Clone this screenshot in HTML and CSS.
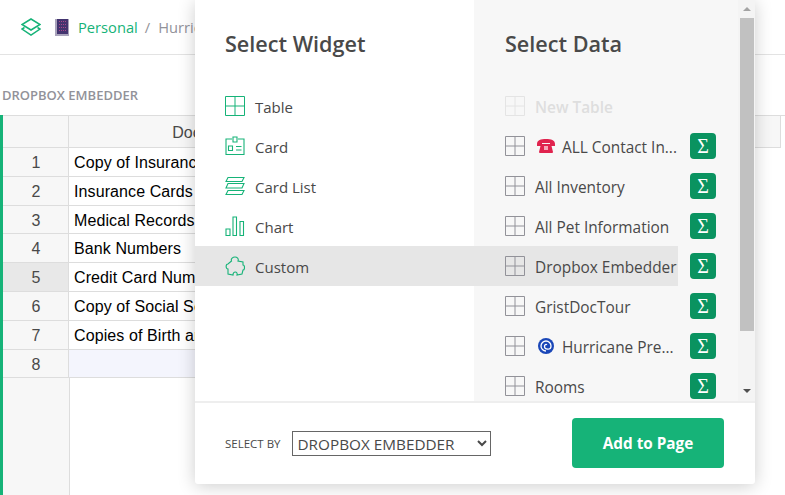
FILE: index.html
```html
<!DOCTYPE html>
<html lang="en">
<head>
  <meta charset="UTF-8">
  <title>Select Widget</title>
  <link rel="stylesheet" href="styles.css">
</head>
<body>

<svg class="defs" width="0" height="0">
  <symbol id="grid" viewBox="0 0 20 20">
    <path d="M.5.5h19v19H.5zM10 .5v19M.5 10h19" fill="none" stroke="currentColor"/>
  </symbol>
</svg>

<!-- page behind the dialog -->
<div class="topbar">
  <svg class="logo" width="20" height="18" viewBox="0 0 20 18">
    <path d="M10 1l9 5.5-9 5.5-9-5.500zM3.500 9.500L1 11l9 6 9-6-2.500-1.500" fill="none" stroke="#16b378" stroke-width="1.500"/>
  </svg>
  <svg class="book" width="14" height="17" viewBox="0 0 14 17">
    <rect x="0" y="0" width="14" height="17" fill="#a9a3bb"/>
    <rect x="2" y="0" width="11" height="15" fill="#43346f"/>
    <path d="M4 2.500h8M4 5.500h8M4 8.500h8M4 11.500h8" stroke="#a8488a" stroke-width="1.200" stroke-dasharray="1 1"/>
  </svg>
  <span class="crumb-org">Personal</span>
  <span class="crumb-sep">/</span>
  <span class="crumb-doc">Hurricane</span>
</div>

<div class="section-title">DROPBOX EMBEDDER</div>

<div class="sheet">
  <div class="row head">
    <div class="num"></div>
    <div class="cell doc-head">Document</div>
    <div class="cell next-head"></div>
  </div>
  <div class="row"><div class="num">1</div><div class="cell">Copy of Insurance Policies</div></div>
  <div class="row"><div class="num">2</div><div class="cell">Insurance Cards</div></div>
  <div class="row"><div class="num">3</div><div class="cell">Medical Records</div></div>
  <div class="row"><div class="num">4</div><div class="cell">Bank Numbers</div></div>
  <div class="row"><div class="num active">5</div><div class="cell">Credit Card Numbers</div></div>
  <div class="row"><div class="num">6</div><div class="cell">Copy of Social Security</div></div>
  <div class="row"><div class="num">7</div><div class="cell">Copies of Birth and Marriage</div></div>
  <div class="row"><div class="num">8</div><div class="cell new-row"></div></div>
  <div class="num filler"></div>
</div>

<!-- add widget dialog -->
<div class="dialog">
  <div class="panels">
    <div class="widgets">
      <h2 class="widgets-title">Select Widget</h2>

      <div class="item">
        <svg class="icon green" viewBox="0 0 20 20"><use href="#grid"/></svg>
        <span class="label">Table</span>
      </div>
      <div class="item">
        <svg class="icon green" viewBox="0 0 20 20">
          <path d="M7 3H1v15.500h18V3h-6M8 1h4v5H8zM3.500 10h4v4.500h-4zM11 10.500h5.500M11 14h5.500" fill="none" stroke="currentColor" stroke-width="1.100"/>
        </svg>
        <span class="label">Card</span>
      </div>
      <div class="item">
        <svg class="icon green" viewBox="0 0 20 20">
          <path d="M3 1.500h16l-2 4H1zM3 7.500h16l-2 4.500H1zM3 14.500h16l-2 4H1z" fill="none" stroke="currentColor" stroke-width="1.100"/>
        </svg>
        <span class="label">Card List</span>
      </div>
      <div class="item">
        <svg class="icon green" viewBox="0 0 20 20">
          <path d="M1 13h4v6.500H1zM8 1h3.500v18.500H8zM15 5.500h3.500v14H15z" fill="none" stroke="currentColor" stroke-width="1.100"/>
        </svg>
        <span class="label">Chart</span>
      </div>
      <div class="item selected">
        <svg class="icon green" viewBox="0 0 20 20">
          <path d="M6.500 5C5.500 2.500 8 1 10 1c2 0 4 1.500 3 4l5 1v3c2 0 2 5 0 5l-1 4-5 1c1-4-4-4-4 0l-5-1v-5C.5 13 .5 8 3 8z" fill="none" stroke="currentColor" stroke-width="1.100"/>
        </svg>
        <span class="label">Custom</span>
      </div>
    </div>

    <div class="data">
      <div class="data-list">
        <h2 class="data-title">Select Data</h2>

        <div class="item disabled">
          <svg class="icon"><use href="#grid"/></svg>
          <span class="label">New Table</span>
        </div>
        <div class="item">
          <svg class="icon"><use href="#grid"/></svg>
          <svg class="emoji" width="18" height="14" viewBox="0 0 18 14">
            <path d="M0 5C0 1 4 0 9 0s9 1 9 5v2h-5V4H5v3H0z" fill="#e0234e"/>
            <path d="M2 13l2-8h10l2 8a1 1 0 0 1-1 1H3a1 1 0 0 1-1-1z" fill="#e0234e"/>
            <path d="M7 7h4v4H7z" fill="#f7a6b8"/>
          </svg>
          <span class="label">ALL Contact In...</span>
          <button class="sum">&Sigma;</button>
        </div>
        <div class="item">
          <svg class="icon"><use href="#grid"/></svg>
          <span class="label">All Inventory</span>
          <button class="sum">&Sigma;</button>
        </div>
        <div class="item">
          <svg class="icon"><use href="#grid"/></svg>
          <span class="label">All Pet Information</span>
          <button class="sum">&Sigma;</button>
        </div>
        <div class="item">
          <div class="hover-wrap">
            <svg class="icon"><use href="#grid"/></svg>
            <span class="label">Dropbox Embedder</span>
          </div>
          <button class="sum">&Sigma;</button>
        </div>
        <div class="item">
          <svg class="icon"><use href="#grid"/></svg>
          <span class="label">GristDocTour</span>
          <button class="sum">&Sigma;</button>
        </div>
        <div class="item">
          <svg class="icon"><use href="#grid"/></svg>
          <svg class="emoji" width="18" height="16" viewBox="0 0 16 16">
            <circle cx="8" cy="8" r="8" fill="#1a47b8"/>
            <path d="M8 13a5 5 0 1 1 5-5c0 2-1.500 3.200-3.200 3.200S6.500 10 6.500 8.300 8 6 9 6.800" fill="none" stroke="#fff" stroke-width="1.300"/>
          </svg>
          <span class="label">Hurricane Pre...</span>
          <button class="sum">&Sigma;</button>
        </div>
        <div class="item">
          <svg class="icon"><use href="#grid"/></svg>
          <span class="label">Rooms</span>
          <button class="sum">&Sigma;</button>
        </div>
      </div>

      <div class="scrollbar">
        <div class="arrow-up"></div>
        <div class="thumb"></div>
        <div class="arrow-down"></div>
      </div>
    </div>
  </div>

  <div class="footer">
    <span class="select-label">SELECT BY</span>
    <select class="select-by">
      <option>DROPBOX EMBEDDER</option>
    </select>
    <button class="add-btn">Add to Page</button>
  </div>
</div>

</body>
</html>
```

FILE: styles.css
```css
html,body{
  margin:0;
  height:100%;
  overflow:hidden;
}
body{
  background-color:#fff;
  font-family:"Open Sans",sans-serif;
  color:#494949;
}
.defs{
  position:absolute;
}

/* page behind */
.topbar{
  height:54px;
  border-bottom:1px solid #e3e3e3;
  display:flex;
  align-items:center;
  font-size:14.700px;
  padding-left:21px;
}
.logo{
  margin-right:14px;
}
.book{
  margin-right:9px;
}
.crumb-org{
  color:#16b378;
}
.crumb-sep{
  color:#929299;
  margin:0 8px 0 7px;
}
.crumb-doc{
  color:#929299;
  white-space:nowrap;
}
.section-title{
  font-size:13px;
  font-weight:600;
  color:#929299;
  padding:32px 0 11px 2px;
  line-height:17px;
  height:17px;
}
.sheet{
  border-left:3px solid #16b378;
  height:380px;
  font-family:"Liberation Sans",sans-serif;
  font-size:16px;
  color:#000;
}
.row{
  display:flex;
  height:28.800px;
  box-sizing:border-box;
}
.row.head{
  height:33px;
  border-top:1px solid #ddd;
}
.num{
  width:66px;
  flex:none;
  box-sizing:border-box;
  background-color:#f7f7f7;
  border-right:1px solid #ddd;
  border-bottom:1px solid #ddd;
  color:#494949;
  text-align:center;
  line-height:30px;
  padding-left:1px;
}
.num.active{
  background-color:#e8e8e8;
}
.num.filler{
  width:67px;
  height:120px;
  border-bottom:none;
}
.cell{
  width:300px;
  flex:none;
  box-sizing:border-box;
  border-right:1px solid #ddd;
  border-bottom:1px solid #ddd;
  padding-left:5px;
  line-height:30px;
  letter-spacing:.1px;
  white-space:nowrap;
  overflow:hidden;
}
.doc-head{
  width:276px;
  background-color:#f7f7f7;
  color:#494949;
  text-align:center;
  line-height:34px;
}
.next-head{
  width:436px;
  background-color:#f7f7f7;
}
.new-row{
  background-color:#f4f5fd;
}

/* dialog */
.dialog{
  position:absolute;
  left:195px;
  top:0;
  width:560px;
  height:484px;
  background-color:#fff;
  box-shadow:0 2px 18px rgba(0,0,0,.2);
  border-radius:0 0 3px 3px;
  display:flex;
  flex-direction:column;
}
.panels{
  height:403px;
  display:flex;
  overflow:hidden;
  border-bottom:2px solid #eee;
  box-sizing:border-box;
  flex:none;
}
.widgets{
  width:279px;
  flex:none;
}
.widgets-title,.data-title{
  margin:0;
  font-size:21.600px;
  font-weight:600;
  color:#494949;
  line-height:28px;
  padding:30px 0 28px 30px;
}
.data-title{
  padding-left:31px;
}
.data{
  flex:1;
  background-color:#f7f7f7;
  display:flex;
}
.data-list{
  flex:1;
}
.item{
  height:40px;
  display:flex;
  align-items:center;
  font-size:15px;
  padding-left:30px;
  box-sizing:border-box;
  white-space:nowrap;
}
.data-list .item{
  font-size:15.400px;
  padding-left:31px;
}
.item.selected{
  background-color:#e6e6e6;
}
.item.disabled{
  color:#dedede;
  font-weight:600;
}
.item.disabled .icon{
  color:#e4e4e4;
}
.icon{
  width:20px;
  height:20px;
  flex:none;
  margin-right:10px;
  color:#929299;
}
.icon.green{
  color:#16b378;
}
.emoji{
  flex:none;
  margin:0 7px 0 2px;
}
.label{
  flex:none;
  margin-top:2px;
}
.hover-wrap{
  display:flex;
  align-items:center;
  align-self:stretch;
  background-color:#e6e6e6;
  margin-left:-31px;
  padding-left:31px;
  width:204px;
  box-sizing:border-box;
}
.sum{
  width:26px;
  height:26px;
  margin-left:auto;
  margin-right:22px;
  padding:0;
  border:none;
  border-radius:4px;
  background-color:#0a9360;
  color:#fff;
  font-family:"Liberation Serif",serif;
  font-size:20px;
  flex:none;
}
.scrollbar{
  width:17px;
  flex:none;
  background-color:#f4f4f4;
  display:flex;
  flex-direction:column;
  align-items:center;
}
.arrow-up{
  margin-top:7px;
  border:4px solid transparent;
  border-top:none;
  border-bottom:4px solid #a3a3a3;
}
.thumb{
  width:14px;
  height:313px;
  margin-top:7px;
  background-color:#c1c1c1;
}
.arrow-down{
  margin-top:58px;
  border:4px solid transparent;
  border-bottom:none;
  border-top:4px solid #505050;
}

/* footer */
.footer{
  flex:1;
  display:flex;
  align-items:center;
  padding:0 31px 0 30px;
}
.select-label{
  font-size:11.500px;
  color:#494949;
  margin-right:11px;
}
.select-by{
  width:199px;
  height:25px;
  font-family:"Open Sans",sans-serif;
  font-size:15.300px;
  color:#494949;
  background-color:#fff;
  border:1px solid #666;
  border-radius:0;
  padding-left:1px;
}
.add-btn{
  margin-left:auto;
  margin-bottom:2px;
  width:152px;
  height:50px;
  border:none;
  border-radius:4px;
  background-color:#16b378;
  color:#fff;
  font-family:"Open Sans",sans-serif;
  font-size:15.300px;
  font-weight:700;
}
```
